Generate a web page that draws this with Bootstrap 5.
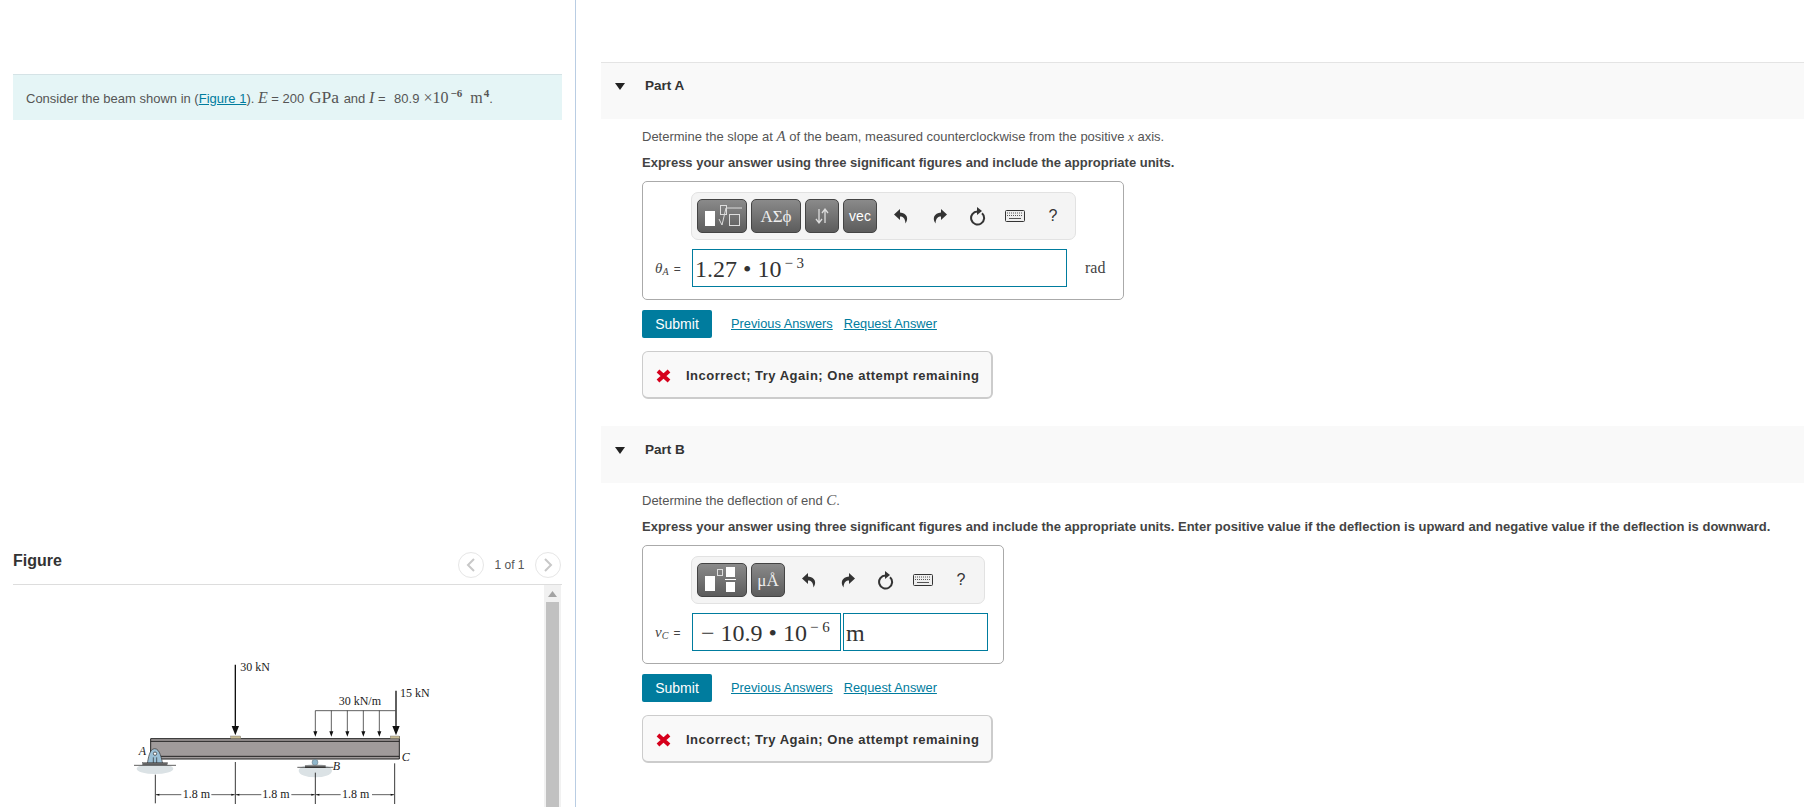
<!DOCTYPE html>
<html lang="en">
<head>
<meta charset="utf-8">
<title>Beam</title>
<link href="https://cdn.jsdelivr.net/npm/bootstrap@5.3.0/dist/css/bootstrap.min.css" rel="stylesheet">
<style>
html,body{height:807px;overflow:hidden}
body{font-family:"Liberation Sans",Arial,sans-serif;font-size:13px;color:#555;background:#fff}
.pg{height:807px}
.lcol{width:576px;flex:none;border-right:1px solid #b9cde3;padding:74px 13px 0 13px}
.rcol{flex:1;min-width:0;padding-top:62px;margin-left:25px}
.m{font-family:"Liberation Serif",serif;font-size:16px}
.gpa{font-size:17.5px;margin:0 1px}
.mi{font-family:"Liberation Serif",serif;font-style:italic;font-size:16px}
.intro{background:#e5f5f6;border-top:1px solid #d5e3e6;height:46px;padding:0 13px;line-height:45px;width:549px;white-space:nowrap;margin-bottom:433px}
.intro sup{font-size:11px;font-weight:bold;top:-.55em}
.sup6{margin:0 8px 0 2px}
.sup4{margin-left:1px}
.num{margin:0 4px 0 5px}
a.lk{color:#007c9e;text-decoration:underline}
.lks{font-size:12.8px}
.fighead{height:32px;border-bottom:1px solid #ddd;width:549px;color:#333}
.fighead b{font-size:16px;color:#333;line-height:16px}
.circ{width:26px;height:26px;border:1px solid #e6e6e6;border-radius:50%}
.pager{margin-top:-1px;font-size:12px;margin-right:1px;gap:10.5px;color:#555}
.pane{width:548px;height:222px;overflow:hidden}
.beam{margin:65px 0 0 107px;flex:none;display:block}
.sbar{width:17px;background:#f1f1f1;flex:none;padding:0 2px}
.sarrow{height:17px}
.sthumb{background:#c1c1c1;flex:1}
.parthd{height:57px;background:#f9f9f9;padding:0 0 9px 14px;color:#333;font-weight:bold;font-size:13.5px}
.parthd.ln{border-top:1px solid #e4e4e4}
.parthd svg{margin-right:20px}
.pbody{padding:0 0 0 41px;margin-top:7px}
.q{line-height:20px;height:20px;margin-bottom:7px;white-space:nowrap}
.q .mi{font-size:15px}
.q2{font-weight:bold;font-size:13px;color:#444;height:20px;line-height:20px;white-space:nowrap}
.ansbox{border:1px solid #aaa;border-radius:5px;height:119px;margin-top:8px;padding:10px 0 0 48px}
.a1{width:482px}
.a2{width:362px}
.tbar{background:#f4f4f4;border:1px solid #e2e2e2;border-radius:7px;height:48px;padding:6px 5px}
.t1{width:385px}
.t2{width:294px}
.tb{flex:none;height:34px;border:1px solid #444;border-radius:5px;background:linear-gradient(#8a8a8a,#5c5c5c);padding:0;color:#fff;margin-right:4px;display:flex;align-items:center;justify-content:center;font-size:14px}
.tb .m{font-size:17px;line-height:1;color:#eee}
.b50{width:50px}
.b34{width:34px}
.ti{width:38px;flex:none;color:#333}
.ti.q3{font-size:16px}
.first1{margin-left:1px}
.lab{width:49px;margin-left:-48px;padding-left:12px;font-family:"Liberation Serif",serif;font-size:13px;color:#444;white-space:nowrap}
.lab i{font-size:15px}
.lab sub{font-size:10px;font-style:italic}
.lab .eq{font-family:"Liberation Sans",sans-serif;font-size:12px;margin-left:2px}
.inbox{height:38px;border:1px solid #007c9e;font-family:"Liberation Serif",serif;font-size:24px;color:#333;line-height:38px;padding-left:2px;white-space:nowrap}
.inbox sup{font-size:15px;top:-.6em;margin-left:3px}
.i1{width:149px;padding-left:8px}
.i2{width:145px;margin-left:2px;padding-left:2px}
.unit{font-family:"Liberation Serif",serif;font-size:16px;color:#444;width:56px;padding-left:18px}
.sub{background:#007c9e;color:#fff;font-size:14px;height:28px;width:70px;border-radius:2px;border:0;padding:0}
.sub:hover{background:#007c9e;color:#fff}
.fb{width:351px;height:48px;border:1px solid #ccc;border-bottom:2px solid #ccc;border-right:2px solid #ccc;border-radius:6px;background:#f9f9f9;color:#333;font-weight:bold;font-size:13px;letter-spacing:.5px;margin-top:13px;padding:2px 0 0 13px;margin-bottom:27px}
.fb svg{margin-right:15px}
.subrow{margin-top:10px}
.lkrow{margin-left:19px;height:27px;gap:11px}
</style>
</head>
<body>
<div class="pg d-flex">
  <div class="lcol">
    <div class="intro">Consider the beam shown in (<a class="lk" href="#">Figure 1</a>). <span class="mi">E</span> = 200 <span class="m gpa">GPa</span> and <span class="mi">I</span> = <span class="num">80.9</span><span class="m">×10<sup class="sup6">−6</sup>m<sup class="sup4">4</sup></span>.</div>
    <div class="fighead d-flex align-items-start justify-content-between">
      <b>Figure</b>
      <div class="pager d-flex align-items-center">
        <span class="circ d-flex align-items-center justify-content-center"><svg width="10" height="14" viewBox="0 0 10 14"><path d="M8 1L2 7l6 6" fill="none" stroke="#c8c8c8" stroke-width="2"/></svg></span>
        <span>1 of 1</span>
        <span class="circ d-flex align-items-center justify-content-center"><svg width="10" height="14" viewBox="0 0 10 14"><path d="M2 1l6 6-6 6" fill="none" stroke="#c8c8c8" stroke-width="2"/></svg></span>
      </div>
    </div>
    <div class="pane d-flex justify-content-between">
      <svg class="beam" width="320" height="157" viewBox="0 0 960 471">
        <rect x="92" y="266" width="746" height="61" fill="#a09b9b"/>
        <path d="M92 266h746M92 274h746M92 319h746M92 327h746M92 266v61M838 258v69" stroke="#222" stroke-width="3" fill="none"/>
        <rect x="332" y="258" width="30" height="8" fill="#c9bd97" stroke="#555"/>
        <rect x="811" y="258" width="28" height="8" fill="#c9bd97" stroke="#555"/>
        <path d="M346 44V236M828 122V236" stroke="#111" stroke-width="4"/>
        <path d="M335 228h22l-11 28zM817 228h22l-11 28z" fill="#111"/>
        <path d="M586 182H826M586 182V246M634 182V246M682 182V246M730 182V246M778 182V246" stroke="#111" stroke-width="2" fill="none"/>
        <path d="M580 244h12l-6 16zM628 244h12l-6 16zM676 244h12l-6 16zM724 244h12l-6 16zM772 244h12l-6 16z" fill="#111"/>
        <ellipse cx="105" cy="356" rx="55" ry="16" fill="#dbe2e5"/>
        <path d="M82 340c3-14 6-44 22-44s20 30 24 44z" fill="#9cc0d6" stroke="#333" stroke-width="2"/>
        <circle cx="105" cy="311" r="5" fill="#fff" stroke="#222" stroke-width="2"/>
        <path d="M100 322v18M110 322v18" stroke="#222" stroke-width="2"/>
        <rect x="68" y="338" width="74" height="6" fill="#666" stroke="#222"/>
        <path d="M42 346H168" stroke="#111" stroke-width="2"/>
        <ellipse cx="586" cy="362" rx="50" ry="20" fill="#dbe2e5"/>
        <circle cx="585" cy="337" r="9" fill="#8fb6ca" stroke="#444"/>
        <rect x="555" y="346" width="62" height="8" fill="#666"/>
        <path d="M532 352H640" stroke="#111" stroke-width="2"/>
        <path d="M106 374V460M346 336V462M586 368V462M824 340V462" stroke="#111" stroke-width="2.5"/>
        <path d="M108 434H184M274 434H344M348 434H424M514 434H584M588 434H662M756 434H822" stroke="#111" stroke-width="2"/>
        <path d="M108 434l10-3v6zM344 434l-10-3v6zM348 434l10-3v6zM584 434l-10-3v6zM588 434l10-3v6zM822 434l-10-3v6z" fill="#111"/>
        <g font-family="Liberation Serif,serif" font-size="36" fill="#222">
          <text x="361" y="62">30 kN</text>
          <text x="840" y="142">15 kN</text>
          <text x="656" y="164">30 kN/m</text>
          <text x="188" y="445">1.8 m</text>
          <text x="427" y="445">1.8 m</text>
          <text x="666" y="445">1.8 m</text>
          <text x="56" y="314" font-style="italic">A</text>
          <text x="638" y="360" font-style="italic">B</text>
          <text x="845" y="334" font-style="italic">C</text>
        </g>
      </svg>
      <div class="sbar d-flex flex-column">
        <div class="sarrow d-flex align-items-center justify-content-center"><svg width="9" height="6" viewBox="0 0 9 6"><path d="M4.5 0L9 6H0z" fill="#a3a3a3"/></svg></div>
        <div class="sthumb"></div>
      </div>
    </div>
  </div>
  <div class="rcol">
    <div class="parthd ln d-flex align-items-center"><svg width="10" height="7" viewBox="0 0 10 7"><path d="M0 0h10L5 7z" fill="#222"/></svg>Part A</div>
    <div class="pbody">
      <div class="q">Determine the slope at <span class="mi">A</span> of the beam, measured counterclockwise from the positive <span class="mi" style="font-size:13px">x</span> axis.</div>
      <div class="q2">Express your answer using three significant figures and include the appropriate units.</div>
      <div class="ansbox a1">
        <div class="tbar t1 d-flex align-items-center">
          <button class="tb b50"><svg width="48" height="32" viewBox="0 0 48 32"><rect x="7" y="11" width="10" height="15" fill="#fff"/><rect x="22.500" y="5.500" width="6" height="9" fill="none" stroke="#ddd"/><path d="M21 19l3 6 4-17h16" fill="none" stroke="#ddd"/><rect x="31.500" y="14.500" width="10" height="11" fill="none" stroke="#ddd"/></svg></button>
          <button class="tb b50"><span class="m">ΑΣϕ</span></button>
          <button class="tb b34"><svg width="16" height="18" viewBox="0 0 16 18"><path d="M5 2v13M2 12l3 4 3-4M11 16V3M8 6l3-4 3 4" fill="none" stroke="#ddd" stroke-width="1.3"/></svg></button>
          <button class="tb b34">vec</button>
          <div class="ti first1 d-flex justify-content-center"><svg width="15" height="15" viewBox="0 0 15 15"><path d="M6 0L0 5.500 6 11V7.500c3 0 5 1.500 5.500 7 3.500-5 1.500-10.500-5.500-11z" fill="#333"/></svg></div>
          <div class="ti d-flex justify-content-center"><svg width="15" height="15" viewBox="0 0 15 15"><path d="M9 0l6 5.500L9 11V7.500c-3 0-5 1.500-5.500 7C0 9.500 2 4 9 3.500z" fill="#333"/></svg></div>
          <div class="ti d-flex justify-content-center"><svg width="17" height="19" viewBox="0 0 17 19"><path d="M13 6.200A6.500 6.500 0 1 1 8.500 4.500" fill="none" stroke="#333" stroke-width="2"/><path d="M8 0l5 4-5 4z" fill="#333"/></svg></div>
          <div class="ti d-flex justify-content-center"><svg width="20" height="12" viewBox="0 0 20 12"><rect x=".5" y=".5" width="19" height="11" rx="1" fill="#eee" stroke="#333"/><path d="M2 3h16M2 5.500h16" stroke="#555" stroke-dasharray="1 1"/><path d="M4 8.500h12" stroke="#555"/></svg></div>
          <div class="ti q3 text-center">?</div>
        </div>
        <div class="d-flex align-items-center" style="margin-top:9px">
          <div class="lab"><i>θ</i><sub>A</sub> <span class="eq">=</span></div>
          <div class="inbox flex-fill">1.27 • 10<sup>− 3</sup></div>
          <div class="unit">rad</div>
        </div>
      </div>
      <div class="d-flex subrow">
        <button class="btn sub">Submit</button>
        <div class="d-flex align-items-center lkrow lks"><a class="lk" href="#">Previous Answers</a><a class="lk" href="#">Request Answer</a></div>
      </div>
      <div class="fb d-flex align-items-center"><svg width="15" height="14" viewBox="0 0 15 14"><path d="M2 2l11 10M13 2L2 12" stroke="#d6001c" stroke-width="4"/></svg>Incorrect; Try Again; One attempt remaining</div>
    </div>
    <div class="parthd d-flex align-items-center"><svg width="10" height="7" viewBox="0 0 10 7"><path d="M0 0h10L5 7z" fill="#222"/></svg>Part B</div>
    <div class="pbody">
      <div class="q">Determine the deflection of end <span class="mi">C</span>.</div>
      <div class="q2">Express your answer using three significant figures and include the appropriate units. Enter positive value if the deflection is upward and negative value if the deflection is downward.</div>
      <div class="ansbox a2">
        <div class="tbar t2 d-flex align-items-center">
          <button class="tb b50"><svg width="48" height="32" viewBox="0 0 48 32"><rect x="7" y="12" width="10" height="15" fill="#fff"/><rect x="19.500" y="5.500" width="5" height="6" fill="none" stroke="#ddd"/><rect x="28" y="3" width="9" height="10" fill="#fff"/><path d="M27 15.500h11" stroke="#fff"/><rect x="28" y="18" width="9" height="10" fill="#fff"/></svg></button>
          <button class="tb b34"><span class="m">μÅ</span></button>
          <div class="ti first1 d-flex justify-content-center"><svg width="15" height="15" viewBox="0 0 15 15"><path d="M6 0L0 5.500 6 11V7.500c3 0 5 1.500 5.500 7 3.500-5 1.500-10.500-5.500-11z" fill="#333"/></svg></div>
          <div class="ti d-flex justify-content-center"><svg width="15" height="15" viewBox="0 0 15 15"><path d="M9 0l6 5.500L9 11V7.500c-3 0-5 1.500-5.500 7C0 9.500 2 4 9 3.500z" fill="#333"/></svg></div>
          <div class="ti d-flex justify-content-center"><svg width="17" height="19" viewBox="0 0 17 19"><path d="M13 6.200A6.500 6.500 0 1 1 8.500 4.500" fill="none" stroke="#333" stroke-width="2"/><path d="M8 0l5 4-5 4z" fill="#333"/></svg></div>
          <div class="ti d-flex justify-content-center"><svg width="20" height="12" viewBox="0 0 20 12"><rect x=".5" y=".5" width="19" height="11" rx="1" fill="#eee" stroke="#333"/><path d="M2 3h16M2 5.500h16" stroke="#555" stroke-dasharray="1 1"/><path d="M4 8.500h12" stroke="#555"/></svg></div>
          <div class="ti q3 text-center">?</div>
        </div>
        <div class="d-flex align-items-center" style="margin-top:9px">
          <div class="lab"><i>v</i><sub>C</sub> <span class="eq">=</span></div>
          <div class="inbox i1">− 10.9 • 10<sup>− 6</sup></div>
          <div class="inbox i2">m</div>
        </div>
      </div>
      <div class="d-flex subrow">
        <button class="btn sub">Submit</button>
        <div class="d-flex align-items-center lkrow lks"><a class="lk" href="#">Previous Answers</a><a class="lk" href="#">Request Answer</a></div>
      </div>
      <div class="fb d-flex align-items-center"><svg width="15" height="14" viewBox="0 0 15 14"><path d="M2 2l11 10M13 2L2 12" stroke="#d6001c" stroke-width="4"/></svg>Incorrect; Try Again; One attempt remaining</div>
    </div>
  </div>
</div>
<script src="https://cdn.jsdelivr.net/npm/bootstrap@5.3.0/dist/js/bootstrap.bundle.min.js"></script>
</body>
</html>
